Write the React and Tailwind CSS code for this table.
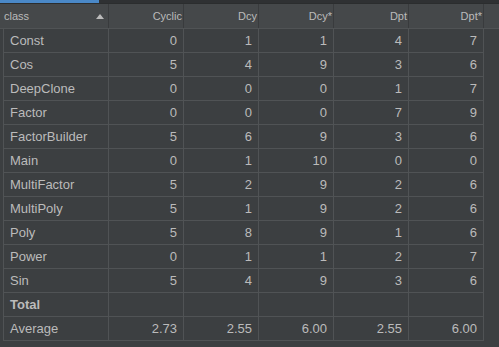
import React from 'react';

const columns = ['Cyclic', 'Dcy', 'Dcy*', 'Dpt', 'Dpt*'];

const rows = [
    { name: 'Const', values: ['0', '1', '1', '4', '7'] },
    { name: 'Cos', values: ['5', '4', '9', '3', '6'] },
    { name: 'DeepClone', values: ['0', '0', '0', '1', '7'] },
    { name: 'Factor', values: ['0', '0', '0', '7', '9'] },
    { name: 'FactorBuilder', values: ['5', '6', '9', '3', '6'] },
    { name: 'Main', values: ['0', '1', '10', '0', '0'] },
    { name: 'MultiFactor', values: ['5', '2', '9', '2', '6'] },
    { name: 'MultiPoly', values: ['5', '1', '9', '2', '6'] },
    { name: 'Poly', values: ['5', '8', '9', '1', '6'] },
    { name: 'Power', values: ['0', '1', '1', '2', '7'] },
    { name: 'Sin', values: ['5', '4', '9', '3', '6'] },
    { name: 'Total', values: ['', '', '', '', ''], bold: true },
    { name: 'Average', values: ['2.73', '2.55', '6.00', '2.55', '6.00'] },
];

function SortArrow() {
    return (
        <svg width="8" height="5" viewBox="0 0 8 5" className="ml-auto mr-[4px]">
            <path d="M4 0 L8 5 L0 5 Z" fill="#bbbbbb" />
        </svg>
    );
}

export default function App() {
    return (
        <div
            className="w-[499px] h-[347px] overflow-hidden bg-[#3c3f41] text-[#bbbbbb]"
            style={{ fontFamily: '"Liberation Sans", Arial, sans-serif' }}
        >
            {/* tab strip */}
            <div className="h-[4px] bg-[#2f3133] border-b border-[#2b2d2e]">
                <div className="w-[99px] h-[3px] bg-[#4a88c7]" />
            </div>

            {/* header */}
            <div className="flex h-[25px] bg-[#45484a] border-b border-[#505355] text-[11px]">
                <div className="w-[109px] flex items-center pl-[4px] border-r border-[#393b3d]">
                    <span>class</span>
                    <SortArrow />
                </div>
                {columns.map((col) => (
                    <div
                        key={col}
                        className="w-[75px] flex items-center justify-end pr-[1px] border-r border-[#393b3d]"
                    >
                        {col}
                    </div>
                ))}
            </div>

            {/* body */}
            <div className="ml-[3px] text-[13px]">
                {rows.map((row) => (
                    <div key={row.name} className="flex h-[24px]">
                        <div
                            className={`w-[106px] flex items-center pl-[6px] border-l border-r border-b border-[#505355] ${row.bold ? 'font-bold' : ''}`}
                        >
                            {row.name}
                        </div>
                        {row.values.map((v, i) => (
                            <div
                                key={i}
                                className="w-[75px] flex items-center justify-end pr-[6px] border-r border-b border-[#505355]"
                            >
                                {v}
                            </div>
                        ))}
                    </div>
                ))}
            </div>
        </div>
    );
}
